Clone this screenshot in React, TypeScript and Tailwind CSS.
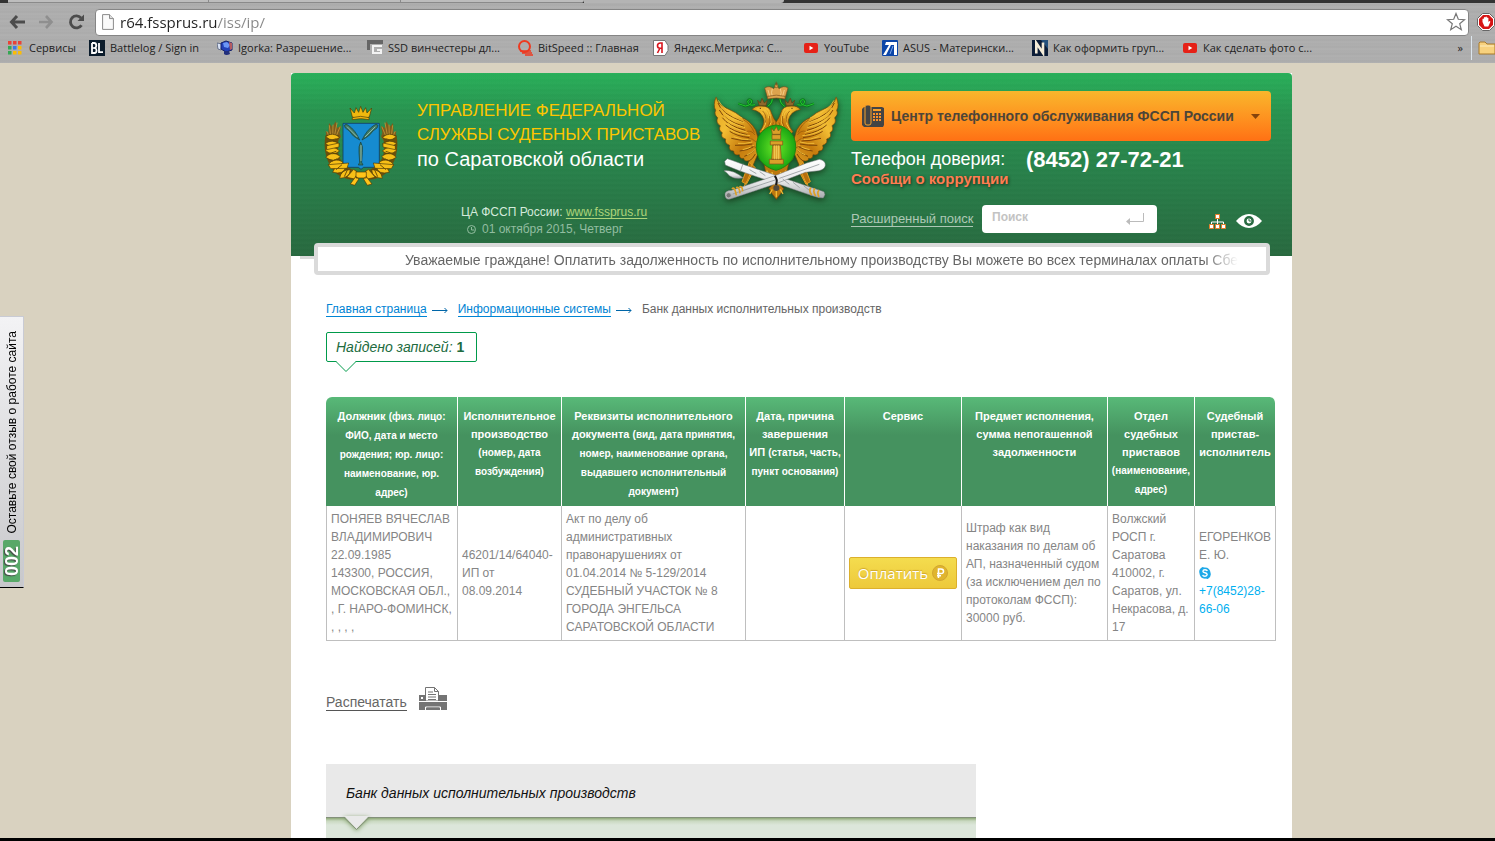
import type { ReactNode } from 'react'

interface Bookmark {
  label: string
  icon: ReactNode
  className: string
}

function AppsIcon() {
  const colors = ['#ea4335', '#ea4335', '#ea4335', '#34a853', '#3b78e7', '#fbbc05', '#34a853', '#fbbc05', '#fbbc05']
  return (
    <svg className="h-4 w-4 shrink-0" viewBox="0 0 16 16">
      {colors.map((c, i) => (
        <rect key={i} x={(i % 3) * 5} y={1 + Math.floor(i / 3) * 5} width="3.5" height="3.5" fill={c} />
      ))}
    </svg>
  )
}

function BattlelogIcon() {
  return (
    <svg className="h-4 w-4 shrink-0" viewBox="0 0 16 16">
      <rect width="16" height="16" fill="#0b1c2c" />
      <path d="M3 3v10h2.5q2 0 2-2.500-.1-2-1.500-2.500 1.300-.6 1.300-2.400Q7.200 3 5.200 3H3M10 3v9.200h4" fill="none" stroke="#fff" strokeWidth="1.800" />
      <path d="M3 8h3" stroke="#fff" strokeWidth="1.300" />
    </svg>
  )
}

function IgorkaIcon() {
  return (
    <svg className="h-4 w-4 shrink-0" viewBox="0 0 16 16">
      <path d="M0 3l5 1-1 6-3-1z" fill="#d9e3f5" stroke="#44506f" strokeWidth=".7" />
      <path d="M4 3l5-2 6 2v7l-6 2-5-3z" fill="#2340b8" stroke="#14216a" />
      <path d="M6 3l4-1 3 3-2 3-4-1z" fill="#6c96f5" />
      <path d="M12 2l3 1v6l-2 1z" fill="#b55c62" />
      <path d="M7 11h5l1 3q-4 2-6 0z" fill="#222f7c" />
    </svg>
  )
}

function SsdIcon() {
  return (
    <svg className="h-4 w-4 shrink-0" viewBox="0 0 16 16">
      <path d="M0 0h16v4H3v6H0z" fill="#666" />
      <path d="M15 6H6v7h8v-3h-4" fill="none" stroke="#f3f3f3" strokeWidth="2" />
    </svg>
  )
}

function BitSpeedIcon() {
  return (
    <svg className="h-4 w-4 shrink-0" viewBox="0 0 16 16" fill="none" stroke="#ee3a20">
      <ellipse cx="7.500" cy="6.500" rx="5.500" ry="5.500" strokeWidth="2" />
      <path d="M3 11h11M5 13h10M8 15h8" strokeWidth="1.300" />
    </svg>
  )
}

function MetrikaIcon() {
  return (
    <svg className="h-4 w-4 shrink-0" viewBox="0 0 16 16">
      <path d="M.5.5H12l3 5v5l-3 5H.5z" fill="#fff" stroke="#777" />
      <path d="M9 13V3H7.500Q4.500 3 4.500 5.700 4.500 8.200 7 8.200H9M7 8l-2.500 5" fill="none" stroke="#d8151c" strokeWidth="1.600" />
    </svg>
  )
}

function YouTubeIcon() {
  return (
    <svg className="h-4 w-4 shrink-0" viewBox="0 0 16 16">
      <rect x="1" y="3" width="14" height="10" rx="2" fill="#e62117" />
      <path d="M6.500 5.800v4.400L10.300 8z" fill="#fff" />
    </svg>
  )
}

function AsusIcon() {
  return (
    <svg className="h-4 w-4 shrink-0" viewBox="0 0 16 16">
      <rect width="16" height="16" rx="1" fill="#0b45a8" />
      <path d="M1 15L7 5h2L4 15zM4 2h11v3H3z" fill="#fff" />
      <path d="M12 5h3v10h-3z" fill="#fff" />
      <path d="M8 14l3-8" stroke="#7ba6ea" strokeWidth="1" />
    </svg>
  )
}

function NIcon() {
  return (
    <svg className="h-4 w-4 shrink-0" viewBox="0 0 16 16">
      <rect width="16" height="16" fill="#0c1d38" />
      <path d="M9 0h7v9z" fill="#24507c" />
      <path d="M4.300 13.500V3l6.700 10V2.500" fill="none" stroke="#f5ecd8" strokeWidth="2.600" />
    </svg>
  )
}

const bookmarks: Bookmark[] = [
  { label: 'Сервисы', icon: <AppsIcon />, className: 'w-[81px]' },
  { label: 'Battlelog / Sign in', icon: <BattlelogIcon />, className: 'w-[128px]' },
  { label: 'Igorka: Разрешение...', icon: <IgorkaIcon />, className: 'w-[150px]' },
  { label: 'SSD винчестеры дл...', icon: <SsdIcon />, className: 'w-[150px]' },
  { label: 'BitSpeed :: Главная', icon: <BitSpeedIcon />, className: 'w-[136px]' },
  { label: 'Яндекс.Метрика: С...', icon: <MetrikaIcon />, className: 'w-[150px]' },
  { label: 'YouTube', icon: <YouTubeIcon />, className: 'w-[79px]' },
  { label: 'ASUS - Матерински...', icon: <AsusIcon />, className: 'w-[150px]' },
  { label: 'Как оформить груп...', icon: <NIcon />, className: 'w-[150px]' },
  { label: 'Как сделать фото с...', icon: <YouTubeIcon />, className: 'w-[150px]' },
]

function BrowserChrome() {
  return (
    <div className="shrink-0 overflow-hidden bg-[#adadad] bg-[repeating-linear-gradient(180deg,#b1b1b1_0px,#acacac_2px,#afafaf_3px,#aaaaaa_5px,#b1b1b1_7px)] font-['Open_Sans','Noto_Sans',sans-serif] text-[11px] text-[#222]">
      {/* Bottom edge of the tab strip */}
      <div className="flex h-[3px] bg-[#333]">
        <div className="ml-2 w-[200px] border-b border-[#8a8a8a] bg-[#bdbdbd]" />
        <div className="w-[192px] border-b border-l border-[#8a8a8a] bg-[#bdbdbd]" />
        <div className="w-[184px] rounded-br border-b border-l border-[#8a8a8a] bg-[#bdbdbd]" />
        <div className="w-[200px] rounded-br bg-[#b4b4b4]" />
      </div>

      <div className="flex h-[34px] items-center pt-1">
        <div className="flex w-[95px] shrink-0 items-center gap-3 pl-2">
          <button type="button" aria-label="Назад">
            <svg className="h-[18px] w-[18px]" viewBox="0 0 18 18" fill="none" stroke="#4c4c4c" strokeWidth="3">
              <path d="M9 3L3.500 9 9 15M4 9h13" />
            </svg>
          </button>
          <button type="button" aria-label="Вперёд">
            <svg className="h-[18px] w-[18px]" viewBox="0 0 18 18" fill="none" stroke="#8f8f8f" strokeWidth="2.600">
              <path d="M8 3l5.500 6L8 15M13 9H1" />
            </svg>
          </button>
          <button type="button" aria-label="Обновить">
            <svg className="h-[18px] w-[18px]" viewBox="0 0 18 18">
              <path d="M13.500 12.200A6 6 0 1 1 13 5" fill="none" stroke="#4c4c4c" strokeWidth="2.800" />
              <path d="M16 1.500V8H9.500z" fill="#4c4c4c" />
            </svg>
          </button>
        </div>
        <div className="flex h-[27px] min-w-0 flex-1 items-center rounded-sm border border-[#858585] bg-white px-1.5">
          <svg className="h-4 w-3 shrink-0" viewBox="0 0 12 16">
            <path d="M.6.6h7l3.800 4v10.800H.6z" fill="#fafafa" stroke="#8b8b8b" />
            <path d="M7.500.6v4h4" fill="#ddd" stroke="#8b8b8b" />
          </svg>
          <input
            aria-label="Адрес"
            defaultValue="r64.fssprus.ru/iss/ip/"
            className="ml-1.5 min-w-0 flex-1 bg-[linear-gradient(90deg,#222_97px,#868686_97px)] bg-clip-text text-[15px] leading-5 text-transparent outline-none"
          />
          <svg className="-mr-1 h-5 w-5 shrink-0" viewBox="0 0 20 20" fill="#fff" stroke="#777" strokeWidth="1.200">
            <path d="M10 1.500l2.300 5.800 6.200.4-4.800 4 1.600 6-5.300-3.400-5.300 3.400 1.600-6-4.800-4 6.200-.4z" />
          </svg>
        </div>
        <svg className="ml-2 h-[18px] w-[18px] shrink-0" viewBox="0 0 18 18">
          <path d="M5.500.5h7l5 5v7l-5 5h-7l-5-5v-7z" fill="#fff" stroke="#666" />
          <path d="M6 2h6l4 4v6l-4 4H6l-4-4V6z" fill="#d61414" />
          <path d="M5.500 9V6q.7-1 1.400 0V4.500q.8-1 1.500 0V4q.8-1 1.500 0v1q.8-1 1.500 0v4l1-1q1.200 0 .9 1l-2 4.500H7.500z" fill="#fff" />
        </svg>
      </div>

      <nav aria-label="Закладки" className="flex h-[26px] items-center pb-1 pl-2">
        {bookmarks.map((b) => (
          <a key={b.label} href="#" className={`flex shrink-0 items-center gap-[5px] whitespace-nowrap ${b.className}`}>
            {b.icon}
            {b.label}
          </a>
        ))}
        <div className="ml-auto flex shrink-0 items-center">
          <button type="button" aria-label="Другие закладки" className="mr-2">»</button>
          <div className="mr-1.5 h-6 w-px bg-[#dce6ee]" />
          <svg className="h-4 w-[17px]" viewBox="0 0 17 16">
            <path d="M1 14V3l1-1h5l2 2h8v10z" fill="#f8d27e" stroke="#a87a2d" />
            <path d="M2 6h14" stroke="#fdeec0" />
          </svg>
        </div>
      </nav>
    </div>
  )
}

function RegionEmblem() {
  return (
    <svg className="h-[81px] w-[75px]" viewBox="38 30 225 243">
      <g fill="#f1b80e" stroke="#4e3a08" strokeWidth="2">
        <path d="M119 39l13 15 5-16 8 14 6-18 7 18 8-14 4 16 14-15-7 27q-26 10-51 0z" />
        <path d="M126 68q25-8 50 0v6q-25-6-50 0z" />
      </g>
      <path d="M98 85h109v126q0 6-7 6h-40l-8 6-8-6h-39q-7 0-7-6z" fill="#168bd0" stroke="#123f65" strokeWidth="2.500" />
      <g fill="#3c7b64" stroke="#163d3b" strokeWidth="2">
        <path d="M102 91q5-6 12 0 21 14 34 44-21-10-32-28l-11-8z" />
        <path d="M203 91q-5-6-12 0-22 14-36 44 22-10 34-28l11-8z" />
        <path d="M151 141q8 12 5 32l-2 29 4 8h-14l4-8-2-29q-2-20 5-32z" />
      </g>
      <path d="M110 95l31 31M195 95l-31 31M152 150v48" stroke="#c0d4ce" strokeWidth="2" />
      {/* Left half of the wreath, drawn once and mirrored */}
      {[false, true].map((flip) => (
        <g key={String(flip)} transform={flip ? 'translate(304 0) scale(-1 1)' : undefined}>
          <path d="M48 128l-2-20 8 6 2-30 10 12 10-17 4 20 12-6-4 20 4 12-8 12H50z" fill="#7d5c1c" />
          <g stroke="#b98d31" strokeWidth="3" strokeLinecap="round">
            <path d="M62 130L57 92M67 130l1-40M71 130l9-46M75 130l14-34M58 128l-8-18" />
          </g>
          <path d="M46 120h41q-8 35-1 65 14 33 54 43v26q-55 4-82-44-22-44-12-90z" fill="#6b500c" />
          <g fill="#f7bf17" stroke="#4a3807" strokeWidth="2">
            <path d="M46 125q20-16 42 2-20 17-42-2zM45 145q22-14 42 2-20 19-42-2zM44 165q22-18 44 3-22 18-44-3zM46 187q19-22 44-3-17 22-44 3zM53 210q18-25 45-9-14 26-45 9zM67 232q9-28 39-17-5 25-39 17zM88 250q4-27 32-26-1 25-32 26z" />
            <path d="M49 152l37-8v12l-37 8zM54 209l61-5-5 16-49 1z" />
            <path d="M109 247l21-24 12 10-9 19z" />
          </g>
          <path d="M55 137l24-6M53 177l25-8M64 199l17-8M77 224l18-15M102 245l9-20" stroke="#6d4e07" strokeWidth="3" />
        </g>
      ))}
      <path d="M137 231h31v18h-31zM136 245l-16 22 13 4 13-20zM168 245l17 22-14 4-12-20z" fill="#ffc319" stroke="#4e3a08" strokeWidth="2" />
    </svg>
  )
}

function EagleWing() {
  return (
    <g>
      <path
        d="M49 82Q54 106 83 116 110 127 126 143q25 9 41 37l15 52-24 57q-16-2-11-17-15 4-16-7-12 3-13-11-17 4-17-11-17 0-12-17-16-6-12-19-17-5-10-19-13-7-6-21-15-9-8-24-12-9-6-22-9-16 1-39z"
        fill="url(#gold)"
        stroke="#73450b"
        strokeWidth="2"
      />
      <path
        d="M54 99q9 32 75 57M58 120q15 32 74 49M67 143q18 25 69 38M77 165q22 20 65 29M89 184q20 14 59 19M94 205q30 8 59 8M105 226q27 1 52-4M119 243q22-2 41-12M133 259q17-5 31-18M146 274q13-7 20-22"
        fill="none"
        stroke="#7c4608"
        strokeWidth="3"
      />
      <path
        d="M55 91q12 28 72 53M61 113q12 26 70 45M70 136q18 24 65 37M83 159q18 18 60 28M93 180q22 14 57 17M101 200q24 10 53 9M114 220q21 2 43-4M128 239q17-3 34-13M141 255q13-5 24-16"
        fill="none"
        stroke="#f5c63e"
        strokeWidth="2.500"
      />
      <path d="M130 149q22 12 33 39M140 184q14-4 25 11M145 207q12-4 23 9M152 231q8-5 17 2" fill="none" stroke="#9a5c0b" strokeWidth="2.500" />
      {/* Neck and head */}
      <path
        d="M156 119q8-12 27-11 26-1 31 20 5 15 15 29v30l-43 8-8-10q22-26 9-47-6-11-17-15-10-4-14-4z"
        fill="url(#gold)"
        stroke="#73450b"
        strokeWidth="2"
      />
      <path d="M170 117h17M191 119q16 7 14 26M202 117q10 12 11 40M197 144q4 20-10 36M213 157q-3 12-11 19" fill="none" stroke="#f5c63e" strokeWidth="3" />
      <path d="M188 123q14 14 8 35M209 138q5 17-5 35M220 157l-7 25" fill="none" stroke="#884d09" strokeWidth="2" />
      <circle cx="181" cy="115" r="2" fill="#502c08" />
      <path d="M173 91l8 8 5-14 7 14 9-8-4 16h-20z" fill="#8e682b" stroke="#5f4014" strokeWidth="2" />
      {/* Ribbon */}
      <path d="M115 101l12 4q9 6 20 0 11-6 8-13-7-8-12 1 1 17 22 11M216 80q4 18-13 29" fill="none" stroke="#087c1b" strokeWidth="7" />
      <path d="M115 101l12 4q9 6 20 0 11-6 8-13-7-8-12 1 1 17 22 11M216 80q4 18-13 29" fill="none" stroke="#25c331" strokeWidth="3" />
      {/* Leg */}
      <path d="M154 282q2 31-22 67M148 277l18 16-27 50-13-8z" fill="#b66f0c" stroke="#e5a025" strokeWidth="3" />
    </g>
  )
}

function EagleEmblem() {
  return (
    <svg className="h-[125px] w-[125px] drop-shadow-[0_2px_3px_rgba(20,50,20,0.8)]" viewBox="42 27 375 375">
      <defs>
        <linearGradient id="gold" x1="0" y1="0" x2="1" y2="1">
          <stop offset="0" stopColor="#e0a11d" />
          <stop offset="0.350" stopColor="#f2bd33" />
          <stop offset="0.650" stopColor="#c67b0d" />
          <stop offset="1" stopColor="#dca024" />
        </linearGradient>
        <radialGradient id="shield">
          <stop offset="0" stopColor="#6be827" />
          <stop offset="1" stopColor="#18a512" />
        </radialGradient>
        <linearGradient id="silver" x1="0" y1="0" x2="0" y2="1">
          <stop offset="0" stopColor="#fff" />
          <stop offset="0.600" stopColor="#e4e5e6" />
          <stop offset="1" stopColor="#a6a9ad" />
        </linearGradient>
      </defs>
      <path d="M188 255h83l-13 66-18 22 11 13-9 15-13 17-13-17-9-16 12-12-20-22z" fill="#bd780e" stroke="#72430b" strokeWidth="2" />
      <path d="M200 302l17 32M216 306l7 39M242 306l-6 39M258 302l-16 32M229 350v32M217 358l-8 14M241 358l8 14" stroke="#f0ba36" strokeWidth="4" />
      <EagleWing />
      <g transform="translate(457 0) scale(-1 1)">
        <EagleWing />
      </g>
      <path d="M228 165q34 3 53 35 14 34-3 67-20 27-50 34-31-7-50-34-17-33-3-67 19-32 53-35z" fill="url(#shield)" stroke="#278310" strokeWidth="3" />
      <g fill="#daa029" stroke="#845016" strokeWidth="2">
        <path d="M214 174l8 9 7-13 6 13 9-9-3 19h-24zM216 194h26v14h-26zM211 213h37v12h-37zM218 225h23l3 43h-29zM208 268h42v14h-42z" />
        <path d="M224 226v42M230 226v42M236 226v42" stroke="#ffe271" />
      </g>
      {/* Crown */}
      <g fill="#dda34d" stroke="#79501d" strokeWidth="2">
        <path d="M194 54q14-9 27 2l8-12 8 12q15-11 27-2l-9 31q-27-8-52 0z" />
        <path d="M204 60l6 21M253 60l-6 21M217 56q-5 13 0 22M241 56q5 13 0 22" fill="none" stroke="#ffe2a4" />
        <circle cx="229" cy="48" r="5" />
        <path d="M229 35v12M225 40h8M203 79q26-7 52 0v8q-26-6-52 0z" />
      </g>
      {/* Crossed staff and axe */}
      <g fill="url(#silver)" stroke="#6f7478" strokeWidth="1.500">
        <path d="M74 274l8-8 14 5 36 13 240 81 3 9-5 10-14-1-20-6L120 303 92 292l-16-7z" />
        <path d="M72 302q28-3 58 22-26 5-42-7-8-10-16-15z" />
        <path d="M75 371q2-9 20-10l130-44 95-38 38-11q19 4 18 18-1 12-19 16l-41 5-96 37-126 42q-20 8-19-15z" />
      </g>
      <path d="M129 281l-8 23M149 299l20 12M179 305l17 12M248 327l20 16M279 337l20 16M311 347l17 14M98 372l127-42M238 325l120-42" stroke="#959a9e" strokeWidth="2.500" />
      <circle cx="86" cy="376" r="8" fill="#777" stroke="#bbb" strokeWidth="3" />
      <path d="M224 318q10 10 4 27" fill="none" stroke="#171717" strokeWidth="6" />
      <circle cx="229" cy="354" r="9" fill="#514a3e" />
      <path d="M96 357q8-10 13 19M108 353q10-5 12 17M118 350q9-3 10 14M333 353q-8 8 2 22M345 355q-8 8 2 23M357 360q-7 8 0 21" fill="none" stroke="#dda027" strokeWidth="5" />
    </svg>
  )
}

function PhoneIcon() {
  return (
    <svg className="h-[22px] w-[22px] shrink-0" viewBox="0 0 22 22">
      <path d="M2 2h18l2 1v17l-1 2H2l-2-2V4z" fill="#444" />
      <rect x="3" y="0" width="6" height="20" rx="2" fill="#444" stroke="#f5a12c" />
      <path d="M11 4h8v2h-8z" fill="#f9a22a" />
      <path d="M11 8h2v2h-2zM14 8h2v2h-2zM17 8h2v2h-2zM11 11h2v2h-2zM14 11h2v2h-2zM17 11h2v2h-2zM11 14h2v2h-2zM14 14h2v2h-2zM17 14h2v2h-2z" fill="#fb922a" />
    </svg>
  )
}

function Header() {
  return (
    <header className="flex h-[183px] rounded-t-sm bg-[repeating-linear-gradient(180deg,rgba(255,255,255,0.015)_0px,rgba(0,0,0,0.015)_2px,rgba(255,255,255,0.01)_5px),linear-gradient(180deg,#29b05a_0%,#28934f_22%,#28804a_55%,#28693f_100%)]">
      <div className="shrink-0 pt-8 pl-8">
        <RegionEmblem />
      </div>
      <div className="ml-[19px] w-[297px] shrink-0 pt-[26px]">
        <h1 className="text-[17px] leading-6 whitespace-nowrap text-[#ffc600]">
          УПРАВЛЕНИЕ ФЕДЕРАЛЬНОЙ
          <br />
          СЛУЖБЫ СУДЕБНЫХ ПРИСТАВОВ
          <br />
          <span className="text-xl leading-6 text-white">по Саратовской области</span>
        </h1>
        <div className="mt-[31px] pl-11 text-xs leading-[17px] text-[#d4eadb]">
          <p>
            ЦА ФССП России:{' '}
            <a href="#" className="text-[#aed47a] underline underline-offset-2">www.fssprus.ru</a>
          </p>
          <p className="flex items-center gap-1.5 pl-1.5 text-[#92bda0]">
            <svg className="h-[9px] w-[9px]" viewBox="0 0 9 9" fill="none" stroke="currentColor">
              <circle cx="4.500" cy="4.500" r="4" />
              <path d="M4.500 2v3h3" />
            </svg>
            01 октября 2015, Четверг
          </p>
        </div>
      </div>
      <div className="shrink-0 pt-1.5">
        <EagleEmblem />
      </div>

      <div className="ml-3 min-w-0 flex-1 pt-[18px] pr-[21px]">
        <button
          type="button"
          className="flex h-[50px] w-full items-center rounded bg-linear-to-b from-[#f9b62c] to-[#ff7014] px-[11px] text-sm font-bold text-[#4d4538]"
        >
          <PhoneIcon />
          <span className="ml-[7px] whitespace-nowrap">Центр телефонного обслуживания ФССП России</span>
          <svg className="ml-auto h-[5px] w-[9px]" viewBox="0 0 9 5">
            <path d="M0 0h9L4.500 5z" fill="#85430c" />
          </svg>
        </button>
        <div className="mt-1.5 flex h-6 items-center whitespace-nowrap text-white">
          <span className="w-[175px] text-lg">Телефон доверия:</span>
          <span className="text-[22px] font-bold">(8452) 27-72-21</span>
        </div>
        <a
          href="#"
          className="block text-[15px] leading-4 font-bold text-[#ff7d51] [text-shadow:1px_1px_3px_#162f1c]"
        >
          Сообщи о коррупции
        </a>
        <form className="mt-[18px] flex items-center">
          <a href="#" className="w-[131px] text-[13px] whitespace-nowrap text-[#adc8b5]">
            <span className="border-b border-[#adc8b5]">Расширенный поиск</span>
          </a>
          <div className="flex h-7 w-[175px] items-center rounded bg-white pr-3 pl-2.5">
            <input
              type="text"
              aria-label="Поиск"
              placeholder="Поиск"
              className="min-w-0 flex-1 pb-1 text-xs font-bold outline-none placeholder:text-[#c3c3c3]"
            />
            <button type="submit" aria-label="Найти">
              <svg className="h-[13px] w-5" viewBox="0 0 20 13" fill="none" stroke="#bbb">
                <path d="M18.500 0v8.500H3" />
                <path d="M5 5L1 8.500 5 12z" fill="#bbb" stroke="none" />
              </svg>
            </button>
          </div>
          <a href="#" aria-label="Карта сайта" className="mt-1 ml-auto">
            <svg className="h-[15px] w-[17px]" viewBox="0 0 17 15">
              <path d="M8.500 4v6M2.500 11V8h12v3" fill="none" stroke="#fff" />
              <path d="M6.500.5h4v4h-4zM.5 10.500h4v4h-4zM6.500 10.500h4v4h-4zM12.500 10.500h4v4h-4z" fill="#fff" stroke="#e67d2a" />
            </svg>
          </a>
          <a href="#" aria-label="Версия для слабовидящих" className="mt-1 mr-[9px] ml-2.5">
            <svg className="h-3.5 w-[26px]" viewBox="0 0 26 14">
              <path d="M0 7Q6 0 13 0t13 7q-6 7-13 7T0 7z" fill="#fff" />
              <circle cx="13" cy="7" r="3.700" fill="none" stroke="#296b42" strokeWidth="2.500" />
              <path d="M13 5v2h2" fill="none" stroke="#296b42" />
            </svg>
          </a>
        </form>
      </div>
    </header>
  )
}

function Arrow() {
  return (
    <svg className="mt-[5px] h-[7px] w-4 shrink-0" viewBox="0 0 16 7" fill="none" stroke="#0066a8">
      <path d="M0 3.500h15M12.500 1l2.500 2.500L12.500 6" />
    </svg>
  )
}

interface Column {
  title: ReactNode
  note?: ReactNode
  className: string
}

const columns: Column[] = [
  { title: 'Должник', note: '(физ. лицо: ФИО, дата и место рождения; юр. лицо: наименование, юр. адрес)', className: 'w-[132px]' },
  { title: 'Исполнительное производство', note: '(номер, дата возбуждения)', className: 'w-[104px]' },
  { title: 'Реквизиты исполнительного документа', note: '(вид, дата принятия, номер, наименование органа, выдавшего исполнительный документ)', className: 'w-[184px]' },
  {
    title: <>Дата, причина завершения<br />ИП</>,
    note: <>(статья, часть,<br />пункт основания)</>,
    className: 'w-[99px] whitespace-nowrap',
  },
  { title: 'Сервис', className: 'w-[117px]' },
  { title: 'Предмет исполнения, сумма непогашенной задолженности', className: 'w-[146px]' },
  { title: 'Отдел судебных приставов', note: '(наименование, адрес)', className: 'w-[87px]' },
  { title: 'Судебный пристав-исполнитель', className: 'w-[81px]' },
]

// Only the fourth header keeps its own line breaks
columns[3].title = <>Дата, причина<br />завершения<br />ИП</>

function ResultsTable() {
  const cell = 'border-r border-b border-[#bfbfbf] p-1 align-middle first:border-l'
  return (
    <table className="w-full table-fixed border-separate border-spacing-0 text-xs leading-[18px] text-[#858585]">
      <thead>
        <tr>
          {columns.map((col) => (
            <th
              key={col.className}
              scope="col"
              className={`h-[109px] border-r border-white bg-linear-to-b from-[#58b978] to-[#45925f] to-35% px-0.5 pt-2.5 pb-0 text-center align-top text-[11px] font-bold text-white first:rounded-tl-md first:px-2.5 last:rounded-tr-md ${col.className}`}
            >
              {col.title} {col.note && <small className="text-[10px] leading-[19px]">{col.note}</small>}
            </th>
          ))}
        </tr>
      </thead>
      <tbody>
        <tr>
          <td className={cell}>
            ПОНЯЕВ ВЯЧЕСЛАВ ВЛАДИМИРОВИЧ
            <br />
            22.09.1985
            <br />
            143300, РОССИЯ,
            <br />
            МОСКОВСКАЯ ОБЛ.,
            <br />, Г. НАРО-ФОМИНСК,
            <br />, , , ,
          </td>
          <td className={cell}>
            46201/14/64040-
            <br />
            ИП от
            <br />
            08.09.2014
          </td>
          <td className={cell}>
            Акт по делу об
            <br />
            административных
            <br />
            правонарушениях от
            <br />
            01.04.2014 № 5-129/2014
            <br />
            СУДЕБНЫЙ УЧАСТОК № 8
            <br />
            ГОРОДА ЭНГЕЛЬСА
            <br />
            САРАТОВСКОЙ ОБЛАСТИ
          </td>
          <td className={cell} />
          <td className={cell}>
            <button
              type="button"
              className="flex h-8 w-full items-center justify-center gap-1 rounded-xs border border-[#dcb02c] bg-linear-to-b from-[#f4dc4e] to-[#edc93a] font-['Open_Sans','Noto_Sans',sans-serif] text-[15px] text-white [text-shadow:0_-1px_1px_#cfa52c]"
            >
              Оплатить
              <svg className="h-4 w-4" viewBox="0 0 16 16">
                <circle cx="8" cy="8" r="7.500" fill="#e0b52e" stroke="#d2a630" />
                <path d="M6.500 13V4H9q2.500 0 2.500 2.300T9 8.500H5M5 10.700h4" fill="none" stroke="#fff" strokeWidth="1.600" />
              </svg>
            </button>
          </td>
          <td className={cell}>
            Штраф как вид
            <br />
            наказания по делам об
            <br />
            АП, назначенный судом
            <br />
            (за исключением дел по
            <br />
            протоколам ФССП):
            <br />
            30000 руб.
          </td>
          <td className={cell}>
            Волжский
            <br />
            РОСП г.
            <br />
            Саратова
            <br />
            410002, г.
            <br />
            Саратов, ул.
            <br />
            <span className="whitespace-nowrap">Некрасова, д.</span>
            <br />
            17
          </td>
          <td className={cell}>
            ЕГОРЕНКОВ
            <br />
            Е. Ю.
            <a href="#" className="block text-[#00aff0]">
              <span className="flex h-[18px] items-center">
                <svg className="h-3 w-3" viewBox="0 0 12 12">
                  <path d="M3.500 0q1 0 1.700.4Q11 0 11.600 6q1 4-2.800 6-1.300 0-2-.4Q1 12 .4 6-.6 2 3.500 0z" fill="#1da8e8" />
                  <path d="M8.300 4Q8 2.700 6 2.700T3.900 4.200Q4 5.500 6 5.800t2.200 1.700Q8 9.200 6 9.200T3.700 7.800" fill="none" stroke="#fff" strokeWidth="1.400" />
                </svg>
              </span>
              +7(8452)28-
              <br />
              66-06
            </a>
          </td>
        </tr>
      </tbody>
    </table>
  )
}

function FeedbackTab() {
  return (
    <a
      href="#"
      className="absolute top-[253px] left-0 flex h-[272px] w-6 flex-col items-center border border-l-0 border-[#c9cbd4] border-b-black bg-linear-to-b from-[#f3f3f5] to-[#c8c8cb] pt-3.5 pb-[5px] text-xs text-black"
    >
      <span className="rotate-180 [writing-mode:vertical-rl]">Оставьте свой отзыв о работе сайта</span>
      <span className="mt-auto flex h-[42px] w-[17px] rotate-180 items-center justify-center rounded-xs bg-[#58a868] text-lg leading-4 font-bold text-white [text-shadow:-1px_-1px_1px_#444] [writing-mode:vertical-rl]">
        002
      </span>
    </a>
  )
}

export default function App() {
  return (
    <div className="flex h-screen flex-col overflow-hidden bg-[#d9d2c0] font-['Liberation_Sans',Arial,sans-serif]">
      <BrowserChrome />
      <div className="relative min-h-0 flex-1 overflow-hidden pt-2.5 pl-[88px]">
        <FeedbackTab />
        <div className="mx-auto min-h-full w-full max-w-[1001px] bg-white">
          <Header />

          {/* Running line, overlaps the lower edge of the header */}
          <div className="relative z-10 mr-[22px] -mt-[13px] ml-[23px] h-8 rounded border-4 border-[#dadada] bg-white before:absolute before:top-[9px] before:-left-[18px] before:h-[3px] before:w-3.5 before:bg-[#dadada]">
            <p className="ml-[87px] w-fit text-sm leading-[26px] whitespace-nowrap text-[#666] [mask-image:linear-gradient(90deg,#000_96%,transparent)]">
              Уважаемые граждане! Оплатить задолженность по исполнительному производству Вы можете во всех терминалах оплаты Сбе
            </p>
          </div>

          <main className="pr-4 pl-[35px]">
            <nav aria-label="Навигация" className="flex items-start pt-[27px] text-xs leading-[14px] text-[#666]">
              <a href="#" className="mr-[5px] border-b border-[#0084d4] text-[#0084d4]">Главная страница</a>
              <Arrow />
              <a href="#" className="mr-[5px] ml-2.5 border-b border-[#0084d4] text-[#0084d4]">Информационные системы</a>
              <Arrow />
              <span className="ml-2.5">Банк данных исполнительных производств</span>
            </nav>

            <div className="relative mt-[15px] flex h-[30px] w-fit items-center rounded-xs border border-[#009a4a] pr-3 pl-[9px] text-sm text-[#216b3e]">
              <p>
                <i>Найдено записей:</i> <b>1</b>
              </p>
              <svg className="absolute top-full left-[9px] h-3 w-5" viewBox="0 0 20 12">
                <path d="M0 0L10 10 20 0z" fill="#fff" />
                <path d="M0 .5L10 10.500 20 .5" fill="none" stroke="#009a4a" />
              </svg>
            </div>

            <div className="mt-[35px]">
              <ResultsTable />
            </div>

            <a href="#" className="mt-[46px] flex w-fit items-end text-sm leading-4 text-[#666]">
              <span className="border-b border-[#555]">Распечатать</span>
              <svg className="ml-3 h-6 w-7" viewBox="0 0 28 24">
                <path d="M0 8h28v15H0z" fill="#747474" />
                <path d="M6.500 14V.5h9l4 4V14z" fill="#fff" stroke="#747474" />
                <path d="M15.500.5v4h4M9 5h5M9 7.500h8M9 10h8M9 12.500h8" fill="none" stroke="#747474" />
                <path d="M0 14.500h28M6.500 23v-3h15v3" fill="none" stroke="#fff" />
                <path d="M8 20.500h12V23H8z" fill="#747474" />
                <path d="M2 10h2v2H2z" fill="#fff" />
              </svg>
            </a>

            <section className="relative mt-[53px] w-[650px] max-w-full">
              <h2 className="h-[53px] bg-[#e9e9e9] pt-5 pl-5 text-sm leading-[18px] text-[#111] italic">
                Банк данных исполнительных производств
              </h2>
              <div className="h-16 border-t border-[#83907b] bg-[linear-gradient(180deg,#8fa978_0px,#c9d8c0_3px,#dce6da_7px)]" />
              <svg className="absolute top-[52px] left-[18px] h-[15px] w-[25px] drop-shadow-[0_1px_2px_#7f9f66]" viewBox="0 0 25 15">
                <path d="M0 0h25L12.500 13z" fill="#e9e9e9" />
                <path d="M0 1.500l12.500 12L25 1.500" fill="none" stroke="#83907b" />
              </svg>
            </section>
          </main>
        </div>
      </div>
      <div className="h-[3px] shrink-0 bg-black" />
    </div>
  )
}
